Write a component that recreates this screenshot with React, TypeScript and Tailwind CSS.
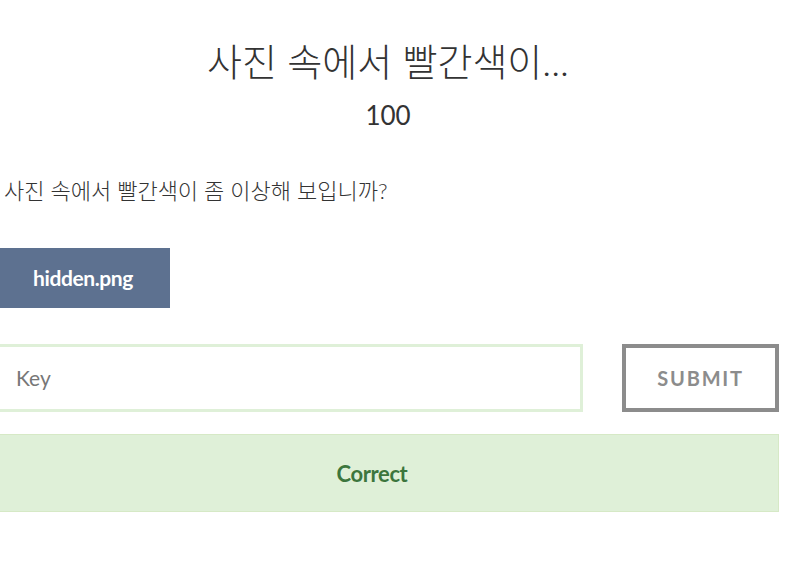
export default function App() {
  const font = { fontFamily: 'Lato, "Noto Sans CJK KR", sans-serif' };
  return (
    <div className="bg-white w-[804px] h-[572px] overflow-hidden" style={font}>
      <div className="w-[782px] -ml-[3px] flex flex-col">
        <h1 className="text-center text-[38px] leading-none font-light text-[#333] mt-[42px]">사진 속에서 빨간색이...</h1>
        <div className="text-center text-[26px] leading-none text-[#333] mt-[22px]">100</div>
        <p className="text-[22px] leading-none font-light text-[#333] mt-[52px] pl-[7px]">사진 속에서 빨간색이 좀 이상해 보입니까?</p>
        <div className="mt-[46px] pl-[3px]">
          <div className="w-[170px] h-[60px] bg-[#5d7190] text-white font-bold text-[21px] flex items-center justify-center pr-[4px] tracking-[-0.4px]">hidden.png</div>
        </div>
        <div className="flex mt-[36px] h-[68px]">
          <div className="w-[587px] border-[3px] border-[#dff0d8] flex items-center pl-[16px] text-[21px] text-[#777]">Key</div>
          <div className="ml-[39px] w-[157px] border-4 border-[#8c8c8c] flex items-center justify-center text-[20px] font-bold tracking-[1.8px] text-[#8c8c8c]">SUBMIT</div>
        </div>
        <div className="mt-[22px] h-[78px] bg-[#dff0d8] border border-[#d6e9c6] flex items-center justify-center pr-[32px] text-[22px] font-bold text-[#3c763d] tracking-[-0.4px]">Correct</div>
      </div>
    </div>
  );
}
